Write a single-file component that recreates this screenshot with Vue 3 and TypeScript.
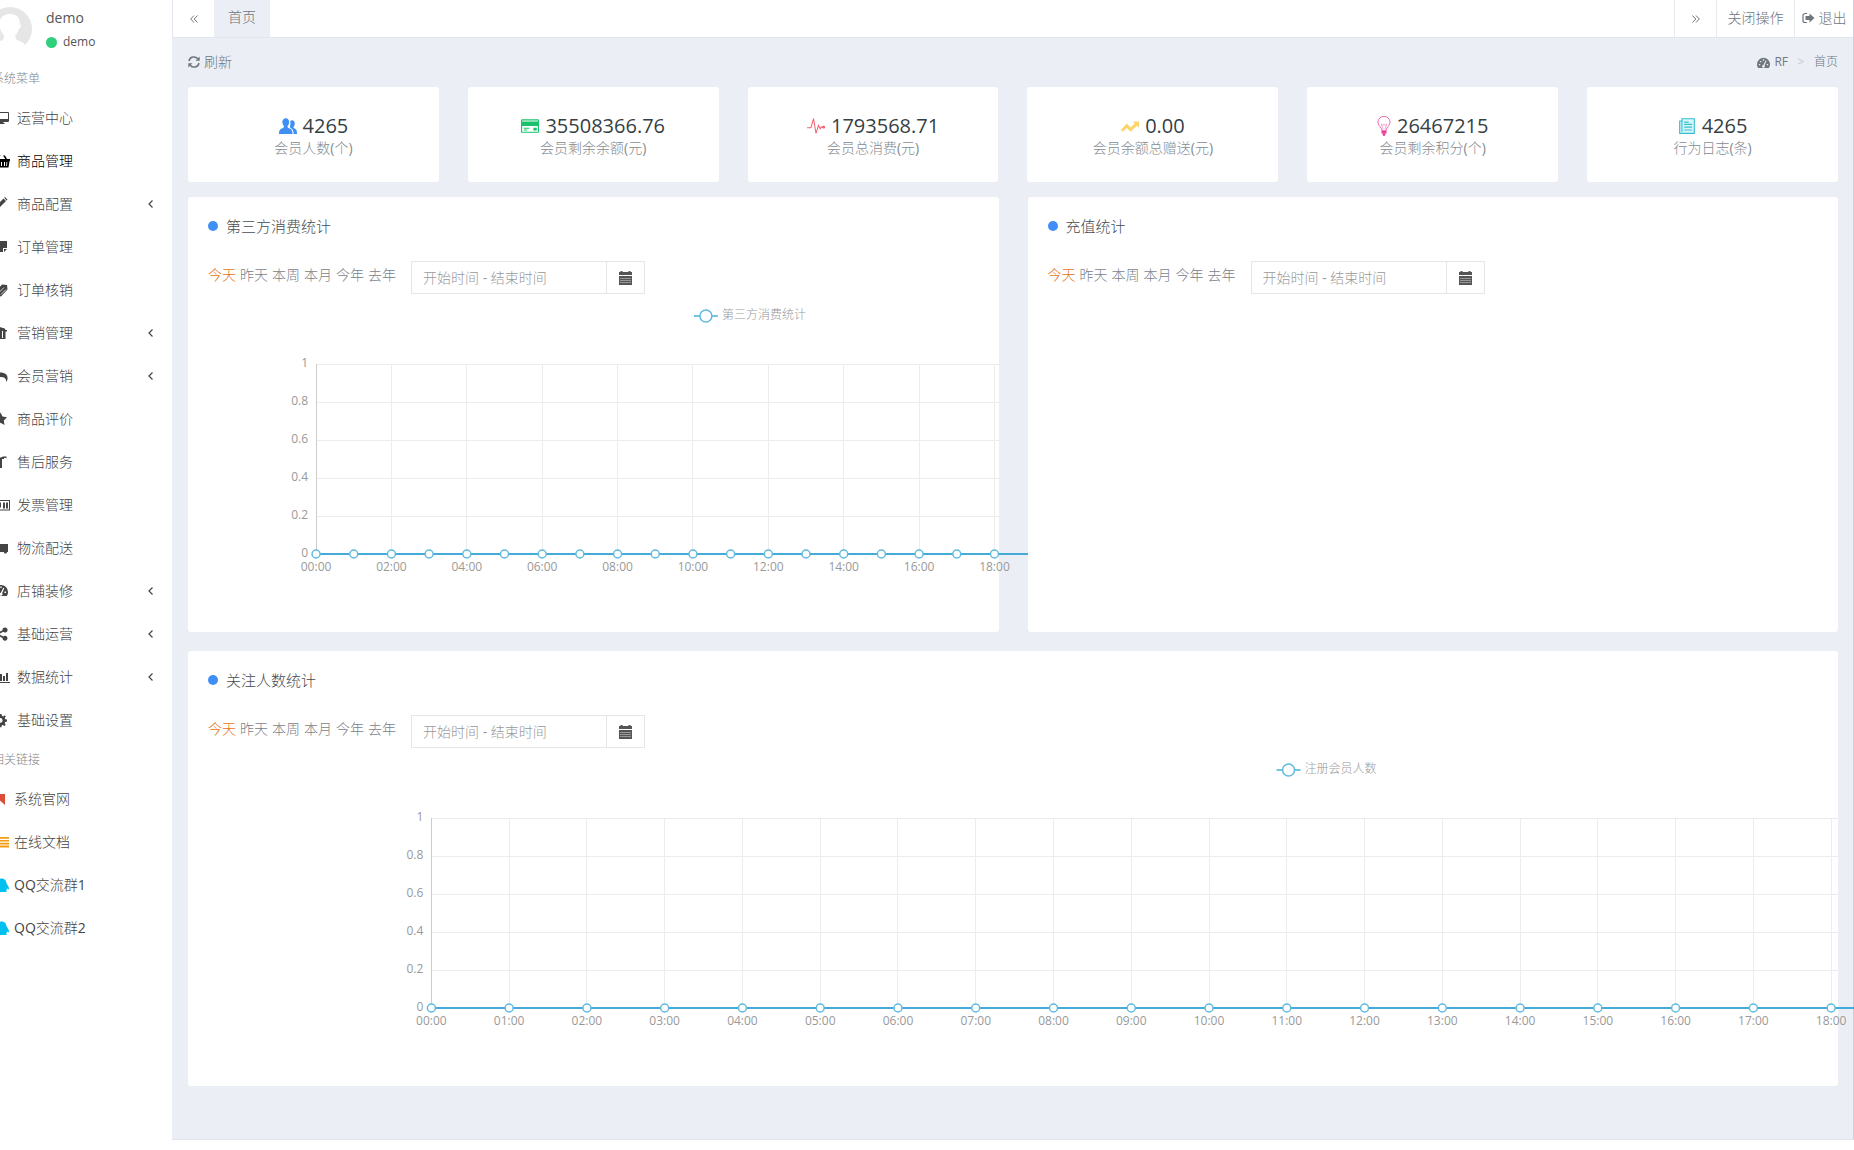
<script setup lang="ts">
interface MenuItem {
  label: string
  icon: string
  color?: string
  arrow?: boolean
}

interface Stat {
  value: string
  label: string
  icon: string
  color: string
}

interface Chart {
  legend: string
  legendAt: number
  origin: number
  step: number
  every: number
}

interface Panel {
  id: string
  title: string
  wide?: boolean
  chart?: Chart
}

const icons: Record<string, string> = {
  desktop: 'M1 2h13a1 1 0 0 1 1 1v8a1 1 0 0 1-1 1H9.500v1h1v1h-6v-1h1v-1H1a1 1 0 0 1-1-1V3a1 1 0 0 1 1-1zm0 1v6h13V3z',
  basket: 'M0 6h3l2-4h1.500L4.700 6h6.600L9 2.500h2L13 6h3v2h-.5l-1 6.500h-13L.5 8H0zM4 9v4h1V9zm3 0v4h1V9zm3 0v4h1V9zm2.500 0-.3 4h.8l.3-4z',
  pencil: 'M9.500 2.500 12 5 4 13H1.500v-2.500zM10.200 1.800l.8-.8 2.500 2.500-.9.9z',
  sticky: 'M0 2h13v7H9v4H0zM10 10h3l-3 3z',
  clip: 'M2 9 8 2.500l5 .5.500 4.500L7 14.500 2.500 13zM4.500 10.500l5-5M6.500 12l5-5',
  bag: 'M0 5h3.500a3 3 0 0 1 5-2 2.500 2.500 0 0 1 3 2H13v1.500h-1.500V14H0zM8 6v7h1V6z',
  reply: 'M0 6.500 6 1.500v3c6 0 8 3 7.500 6.500-.2 1.500-1 2.500-1.500 3 .5-3-1-5-6-5v3z',
  star: 'm6.500 1.500 2 4 4.500.7-3.200 3.200.7 4.600-4-2.200-4 2.200.7-4.600L0 6.200l4.500-.7z',
  tool: 'M0 3.500h7L9 2.500h3.500V4H10v1H8v9H3V5.500H0z',
  news: 'M0 3h16v10.500H0zM1 4v8.500h14V4zM2 5.500h5v5H2zM3 6.500v3h3v-3zM9 5.500h2v6H9zM12 5.500h2v6h-2z',
  truck: 'M0 6h5V4h9v8h-1a1.600 1.600 0 0 1-3.200 0H5a1.600 1.600 0 0 1-3.200 0H0z',
  gauge: 'M7 2a7 7 0 0 0-7 7c0 1.800.6 3 1.300 4h11.400C13.500 12 14 10.800 14 9a7 7 0 0 0-7-7zM6.300 3.500h1.400v1.600H6.300zM2 8.500h1.500V10H2zM3.300 5.300h1.400v1.400H3.300zM10.500 8.500H12V10h-1.500zM9.300 4.800l1 .4-2.200 5a1.500 1.500 0 1 1-1.300-.5z',
  share: 'M11 1.500a2.500 2.500 0 1 1-1.700 4.300L5.500 7.700v.8l3.800 1.900A2.500 2.500 0 1 1 8.500 12L4.300 9.900A2.500 2.500 0 1 1 4.300 6.200l4.200-2A2.500 2.500 0 0 1 11 1.500z',
  bars: 'M0 2h1v11h15v1H0zM3 9h2v3H3zM6 5h2v7H6zM9 7h2v5H9zM12 4h2v8h-2z',
  cog: 'M5 2h2.500l.4 1.800 1.300.6L10.800 3.300l1 1-1 1.700.5 1.200 1.700.3v2l-1.800.5-.5 1.200 1 1.500-1.200 1.200-1.600-1-1.200.5-.3 1.800H5l-.5-1.800L0 12V4l4.600-.2zM6.200 6a2.400 2.400 0 1 0 0 4.800 2.400 2.400 0 0 0 0-4.800z',
  bookmark: 'M0 3h11v11l-5-4.500L1 14H0z',
  lines: 'M0 3h15v1.800H0zM0 6h15v1.600H0zM0 8.800h15v1.600H0zM0 11.600h15v1.800H0z',
  qq: 'M7.500 1.500c3.500 0 5 2.500 5 5 2 2.500 3 5 2.300 6l-1.600-1c-.2 1-.7 1.500-1.200 2 1 .5 1 1.500 0 1.500H2v-13z',
  users: 'M6 1c2 0 3 1.500 3 3.500 0 1.600-.6 2.700-1.300 3.500-.4.600 0 1.300.8 1.700C11 10.700 12 11.500 12 15H0c0-3.500 1-4.300 3.500-5.300.8-.4 1.200-1.100.8-1.700C3.600 7.200 3 6.100 3 4.500 3 2.500 4 1 6 1zM10 3.500c.5-.5 1-.7 1.600-.7C13.200 2.800 14 4 14 5.700c0 1.300-.4 2.200-1 2.900-.4.600-.1 1 .4 1.400 2 .9 2.600 1.500 2.600 5h-3c0-3-1-4.500-3-5.500C9.300 8.700 10 8 10.200 6.500z',
  card: 'M1 2h14a1 1 0 0 1 1 1v10a1 1 0 0 1-1 1H1a1 1 0 0 1-1-1V3a1 1 0 0 1 1-1zM1 3v1h14V3zM1 8v5h14V8zM2.500 9.500h5v1h-5zM2.500 11h3v1h-3zM11 9.500h3V12h-3z',
  trend: 'M0 11.500 5 5.800l3.500 3.500 3.600-3.600L10.500 4H16v5.500l-1.900-1.800L8.500 13 5.200 9.700 1.400 13z',
}

const menu: MenuItem[] = [
  { label: '运营中心', icon: 'desktop' },
  { label: '商品管理', icon: 'basket' },
  { label: '商品配置', icon: 'pencil', arrow: true },
  { label: '订单管理', icon: 'sticky' },
  { label: '订单核销', icon: 'clip' },
  { label: '营销管理', icon: 'bag', arrow: true },
  { label: '会员营销', icon: 'reply', arrow: true },
  { label: '商品评价', icon: 'star' },
  { label: '售后服务', icon: 'tool' },
  { label: '发票管理', icon: 'news' },
  { label: '物流配送', icon: 'truck' },
  { label: '店铺装修', icon: 'gauge', arrow: true },
  { label: '基础运营', icon: 'share', arrow: true },
  { label: '数据统计', icon: 'bars', arrow: true },
  { label: '基础设置', icon: 'cog' },
]

const links: MenuItem[] = [
  { label: '系统官网', icon: 'bookmark', color: '#dd4b39' },
  { label: '在线文档', icon: 'lines', color: '#f39c12' },
  { label: 'QQ交流群1', icon: 'qq', color: '#00c0ef' },
  { label: 'QQ交流群2', icon: 'qq', color: '#00c0ef' },
]

const stats: Stat[] = [
  { value: '4265', label: '会员人数(个)', icon: 'users', color: '#3f8ff7' },
  { value: '35508366.76', label: '会员剩余余额(元)', icon: 'card', color: '#19c26b' },
  { value: '1793568.71', label: '会员总消费(元)', icon: 'pulse', color: '#f5606c' },
  { value: '0.00', label: '会员余额总赠送(元)', icon: 'trend', color: '#fcd468' },
  { value: '26467215', label: '会员剩余积分(个)', icon: 'bulb', color: '#e8409a' },
  { value: '4265', label: '行为日志(条)', icon: 'paper', color: '#36bfd3' },
]

const periods = ['今天', '昨天', '本周', '本月', '今年', '去年']

const panels: Panel[] = [
  {
    id: 'consume',
    title: '第三方消费统计',
    chart: { legend: '第三方消费统计', legendAt: 63.9, origin: 15.8, step: 4.65, every: 2 },
  },
  { id: 'recharge', title: '充值统计' },
  {
    id: 'follow',
    title: '关注人数统计',
    wide: true,
    chart: { legend: '注册会员人数', legendAt: 66.7, origin: 14.75, step: 4.713, every: 1 },
  },
]

const plotTop = 69
const plotBottom = 259
const ticks = [1, 0.8, 0.6, 0.4, 0.2, 0]
const hours = Array.from({ length: 19 }, (_, i) => i)

const tickY = (v: number) => plotBottom - Math.round(v * (plotBottom - plotTop))
const hourX = (c: Chart, h: number) => `${c.origin + c.step * h}%`
const labelled = (c: Chart) => hours.filter((h) => h % c.every === 0)
const clock = (h: number) => `${String(h).padStart(2, '0')}:00`
</script>

<template>
  <div class="app">
    <aside class="sidebar">
      <div class="user">
        <svg class="avatar" viewBox="0 0 44 44" aria-hidden="true">
          <circle cx="22" cy="22" r="22" fill="#e6e6e6" />
          <path d="M22 7c7 0 10 4 10 10 1.500 1 1 4-1 5-.7 3-2 5-3.500 6-.5 4 1 5 4 6 3 1.200 5 2.500 6 5l-5 5H12l-6-5c1-2.500 3-4 6-5 3-1 4.500-2 4-6-1.500-1-3-3-3.500-6-2-1-2.500-4-1-5C11.500 11 15 7 22 7z" fill="#fff" />
        </svg>
        <div class="user-text">
          <div class="user-name">demo</div>
          <div class="user-status"><span class="online"></span>demo</div>
        </div>
      </div>
      <nav>
        <h2 class="group">系统菜单</h2>
        <ul>
          <li v-for="item in menu" :key="item.label">
            <a href="#" class="item" :class="{ active: item.label === '商品管理' }">
              <svg class="item-icon" viewBox="0 0 16 16" aria-hidden="true">
                <path :d="icons[item.icon]" fill="currentColor" fill-rule="evenodd" />
                <path v-if="item.icon === 'clip'" d="m5 10.500 5-5M7 12.500l5-5" stroke="#fff" stroke-width=".8" />
              </svg>
              <span class="item-label">{{ item.label }}</span>
              <svg v-if="item.arrow" class="arrow" viewBox="0 0 6 10" aria-hidden="true">
                <path d="M4.500 1.500 1 5l3.500 3.500" fill="none" stroke="currentColor" stroke-width="1.200" />
              </svg>
            </a>
          </li>
        </ul>
        <h2 class="group">相关链接</h2>
        <ul class="links">
          <li v-for="item in links" :key="item.label">
            <a href="#" class="item">
              <svg class="item-icon" viewBox="0 0 16 16" aria-hidden="true">
                <path :d="icons[item.icon]" :fill="item.color" fill-rule="evenodd" />
              </svg>
              <span class="item-label">{{ item.label }}</span>
            </a>
          </li>
        </ul>
      </nav>
    </aside>

    <main class="main">
      <header class="tabs">
        <button class="tab-btn scroll" aria-label="向左">
          <svg viewBox="0 0 8 8" width="8" height="8"><path d="M4 .5.700 4 4 7.500M7.500.5 4.200 4l3.300 3.500" fill="none" stroke="currentColor" /></svg>
        </button>
        <a href="#" class="tab">首页</a>
        <span class="spacer"></span>
        <button class="tab-btn next" aria-label="向右">
          <svg viewBox="0 0 8 8" width="8" height="8"><path d="M.5.500 3.800 4 .5 7.500M4 .5 7.300 4 4 7.500" fill="none" stroke="currentColor" /></svg>
        </button>
        <button class="tab-btn close">关闭操作</button>
        <a href="#" class="tab-btn logout">
          <svg viewBox="0 0 13 12" width="13" height="12" aria-hidden="true">
            <path d="M5 1.500H3A2 2 0 0 0 1 3.500v5a2 2 0 0 0 2 2h2" fill="none" stroke="currentColor" stroke-width="1.200" />
            <path d="M3.500 4h4V1.500L12.500 6l-5 4.500V8h-4z" fill="currentColor" />
          </svg>
          退出
        </a>
      </header>

      <div class="toolbar">
        <a href="#" class="refresh">
          <svg viewBox="0 0 12 12" width="12" height="12" aria-hidden="true">
            <path d="M1 5a5 5 0 0 1 8.800-2.200M11 7a5 5 0 0 1-8.800 2.200" fill="none" stroke="currentColor" stroke-width="1.500" />
            <path d="M11.700.5v4.200H7.500zM.3 11.500V7.300h4.200z" fill="currentColor" />
          </svg>
          刷新
        </a>
        <nav class="crumbs">
          <a href="#" class="crumb-home">
            <svg viewBox="0 0 14 14" width="13" height="13" aria-hidden="true">
              <path :d="icons.gauge" fill="currentColor" fill-rule="evenodd" />
            </svg>
            RF
          </a>
          <span class="sep">&gt;</span>
          <span>首页</span>
        </nav>
      </div>

      <section class="stats">
        <div v-for="s in stats" :key="s.label" class="stat">
          <div class="stat-value">
            <svg viewBox="0 0 16 16" class="stat-icon" :class="s.icon" :style="{ color: s.color }" aria-hidden="true">
              <path v-if="icons[s.icon]" :d="icons[s.icon]" fill="currentColor" fill-rule="evenodd" />
              <g v-else-if="s.icon === 'pulse'" fill="none" stroke="currentColor" stroke-width=".9">
                <path d="M0 9.500h3.500l2.300-8 2.200 13 2.200-7 1.500 3 1-1.500h2" />
                <circle cx="14.800" cy="9" r=".8" fill="currentColor" />
              </g>
              <g v-else-if="s.icon === 'bulb'" fill="none" stroke="currentColor" stroke-width=".6">
                <path d="M6.200 11.500C6.200 9 3.200 8 3.200 4.800a4.800 4.500 0 0 1 9.600 0C12.800 8 9.800 9 9.800 11.500" />
                <path d="M7.300 11 5.800 6.500l1.500 1 .7-1 .7 1 1.500-1L8.700 11" stroke-opacity=".6" />
                <path d="M6.300 11.800h3.400v2H6.300zM7.200 14.300h1.600v1.200H7.200z" fill="currentColor" />
              </g>
              <g v-else fill="none" stroke="currentColor">
                <path d="M3.500 1.500h11v13h-13v-11h2z" fill="#d8f5f8" />
                <path d="M3.500 3v10M5.500 4.500h4M5.500 6.500h7M5.500 9h7M5.500 11.500h7" />
              </g>
            </svg>
            {{ s.value }}
          </div>
          <div class="stat-label">{{ s.label }}</div>
        </div>
      </section>

      <div class="panels">
        <section v-for="p in panels" :key="p.id" class="panel" :class="{ wide: p.wide }">
          <h3 class="panel-title"><span class="bullet"></span>{{ p.title }}</h3>
          <div class="filters">
            <div class="periods">
              <a v-for="(t, i) in periods" :key="t" href="#" :class="{ current: i === 0 }">{{ t }}</a>
            </div>
            <div class="range">
              <input :id="`range-${p.id}`" type="text" placeholder="开始时间 - 结束时间" aria-label="时间范围" />
              <label :for="`range-${p.id}`" class="range-btn">
                <svg viewBox="0 0 13 14" width="13" height="14" aria-hidden="true">
                  <path d="M0 1h1.500V0h2v1h6V0h2v1H13v3H0zM0 5h13v9H0z" fill="#555" />
                  <path d="M1 7.500h11M1 9.500h11M1 11.500h11" stroke="#aaa" stroke-width=".8" />
                </svg>
              </label>
            </div>
          </div>

          <svg v-if="p.chart" class="chart" role="img" :aria-label="p.chart.legend">
            <svg :x="`${p.chart.legendAt}%`" y="21" overflow="visible">
              <path d="M-12 0h24" class="mark-line" />
              <circle r="6" class="mark" />
              <text x="16" y="3" class="legend">{{ p.chart.legend }}</text>
            </svg>
            <g class="grid">
              <line v-for="t in ticks.slice(0, -1)" :key="t" :x1="hourX(p.chart, 0)" x2="100%" :y1="tickY(t)" :y2="tickY(t)" />
              <line v-for="h in labelled(p.chart).slice(1)" :key="h" :x1="hourX(p.chart, h)" :x2="hourX(p.chart, h)" :y1="plotTop" :y2="plotBottom" />
            </g>
            <line class="axis" :x1="hourX(p.chart, 0)" :x2="hourX(p.chart, 0)" :y1="plotTop" :y2="plotBottom" />
            <text v-for="t in ticks" :key="`t${t}`" :x="hourX(p.chart, 0)" dx="-8" :y="tickY(t)" dy="3" class="tick">{{ t }}</text>
            <text v-for="h in labelled(p.chart)" :key="`h${h}`" :x="hourX(p.chart, h)" :y="plotBottom + 17" class="hour">{{ clock(h) }}</text>
            <line class="series" :x1="hourX(p.chart, 0)" x2="110%" :y1="plotBottom" :y2="plotBottom" />
            <circle v-for="h in hours" :key="`c${h}`" :cx="hourX(p.chart, h)" :cy="plotBottom" r="4" class="mark" />
          </svg>
        </section>
      </div>
    </main>
    <footer class="footer"></footer>
  </div>
</template>

<style>
body {
  background: #fff;
  overflow-x: hidden;
}
</style>

<style scoped>
* {
  box-sizing: border-box;
}

.app {
  min-height: 100vh;
  display: grid;
  grid-template-columns: 172px minmax(0, 1fr);
  grid-template-rows: 1fr 11px;
  font-family: 'Open Sans', 'Noto Sans CJK SC Light', 'Noto Sans CJK SC DemiLight', 'Noto Sans CJK SC', sans-serif;
  font-size: 14px;
  line-height: 20px;
  color: #6f767e;
  overflow: hidden;
}

a {
  color: inherit;
  text-decoration: none;
}

button,
input {
  font: inherit;
  color: inherit;
}

ul,
h2,
h3 {
  margin: 0;
  padding: 0;
  list-style: none;
  font-weight: 400;
}

/* sidebar, partly slid out past the left edge */
.sidebar {
  grid-row: 1 / 3;
  margin-left: -20px;
  background: #fff;
}

.user {
  display: flex;
  gap: 14px;
  height: 60px;
  padding: 7px 0 0 8px;
  color: #555;
}

.avatar {
  width: 44px;
  height: 44px;
}

.user-text {
  display: flex;
  flex-direction: column;
  gap: 4px;
  padding-top: 1px;
}

.user-status {
  display: flex;
  align-items: center;
  gap: 6px;
  font-size: 12px;
}

.online {
  width: 11px;
  height: 11px;
  border-radius: 50%;
  background: #2ed07c;
}

.group {
  padding: 9px 12px 7px;
  font-size: 12px;
  color: #848484;
}

.item {
  display: flex;
  align-items: center;
  height: 43px;
  padding: 0 18px 0 14px;
  color: #444;
}

.item.active {
  color: #000;
}

.item-icon {
  width: 16px;
  height: 16px;
  margin-right: 7px;
}

.links .item-icon {
  margin-right: 4px;
}

.item-label {
  flex: 1;
}

.arrow {
  width: 6px;
  height: 10px;
}

/* content column */
.main {
  background: #ebeff5;
  border-right: 1px solid #cdd1da;
  min-width: 0;
}

.tabs {
  display: flex;
  align-items: stretch;
  height: 38px;
  background: #fff;
  border-bottom: 1px solid #e3e6ec;
  border-left: 1px solid #e3e6ec;
}

.tab-btn {
  display: flex;
  align-items: center;
  justify-content: center;
  gap: 4px;
  padding: 0 0 2px;
  border: 0;
  border-left: 1px solid #e8eaee;
  background: #fff;
}

.scroll {
  width: 41px;
  padding: 0;
  border-left: 0;
}

.tab {
  width: 56px;
  padding: 7px 0;
  text-align: center;
  background: #ebeff5;
}

.spacer {
  flex: 1;
}

.next {
  width: 42px;
  padding: 0;
}

.close {
  width: 78px;
}

.logout {
  width: 59px;
}

.toolbar {
  display: flex;
  align-items: flex-start;
  justify-content: space-between;
  height: 49px;
  padding: 14px 15px 0 16px;
}

.refresh,
.crumb-home {
  display: flex;
  align-items: center;
  gap: 4px;
}

.crumbs {
  display: flex;
  gap: 8px;
  font-size: 12px;
}

.sep {
  width: 10px;
  text-align: center;
  color: #c4c8cf;
}

.stats {
  display: grid;
  grid-template-columns: repeat(6, minmax(0, 1fr));
  gap: 29px;
  padding: 0 15px 0 16px;
}

.stat {
  padding: 25px 0 26px;
  border-radius: 3px;
  background: #fff;
  text-align: center;
}

.stat-value {
  display: flex;
  align-items: center;
  justify-content: center;
  gap: 6px;
  font-size: 20px;
  line-height: 28px;
  color: #363f44;
}

.stat-icon {
  width: 18px;
  height: 18px;
}

.stat-icon.bulb {
  width: 20px;
  height: 20px;
  margin: 0 -3px;
}

.stat-label {
  line-height: 16px;
  color: #848b92;
}

.panels {
  display: grid;
  grid-template-columns: repeat(2, minmax(0, 1fr));
  gap: 19px 29px;
  padding: 15px 15px 52px 16px;
}

.panel {
  min-height: 435px;
  border-radius: 3px;
  background: #fff;
}

.wide {
  grid-column: 1 / 3;
}

.panel-title {
  display: flex;
  align-items: center;
  gap: 8px;
  padding: 15px 20px 0;
  font-size: 15px;
  line-height: 28px;
  color: #464c52;
}

.bullet {
  width: 10px;
  height: 10px;
  border-radius: 50%;
  background: #3f8ff7;
}

.filters {
  display: flex;
  gap: 15px;
  padding: 21px 20px 0;
}

.periods {
  display: flex;
  gap: 4px;
  padding-top: 4px;
  color: #7b828a;
}

.periods .current {
  color: #e67320;
}

.range {
  display: flex;
  height: 33px;
}

.range input {
  width: 196px;
  padding: 0 11px;
  border: 1px solid #e5e6e7;
  background: #fff;
  outline: none;
}

.range input::placeholder {
  color: #999;
  opacity: 1;
}

.range-btn {
  display: flex;
  align-items: center;
  justify-content: center;
  width: 38px;
  border: 1px solid #e5e6e7;
  border-left: 0;
}

.chart {
  display: block;
  width: 100%;
  height: 337px;
  margin-top: 1px;
  overflow: visible;
  font-size: 12px;
}

.chart text {
  fill: #999;
}

.tick {
  text-anchor: end;
}

.hour {
  text-anchor: middle;
}

.grid {
  stroke: #ececec;
}

.grid,
.axis {
  shape-rendering: crispEdges;
}

.axis {
  stroke: #ccc;
}

.series {
  stroke: #46aad8;
  stroke-width: 2;
}

.mark-line {
  stroke: #73c5e4;
  stroke-width: 2;
}

.mark {
  fill: #fff;
  stroke: #5fbbe0;
  stroke-width: 1.500;
}

.footer {
  border-top: 1px solid #e0e3e9;
  background: #fff;
}
</style>
